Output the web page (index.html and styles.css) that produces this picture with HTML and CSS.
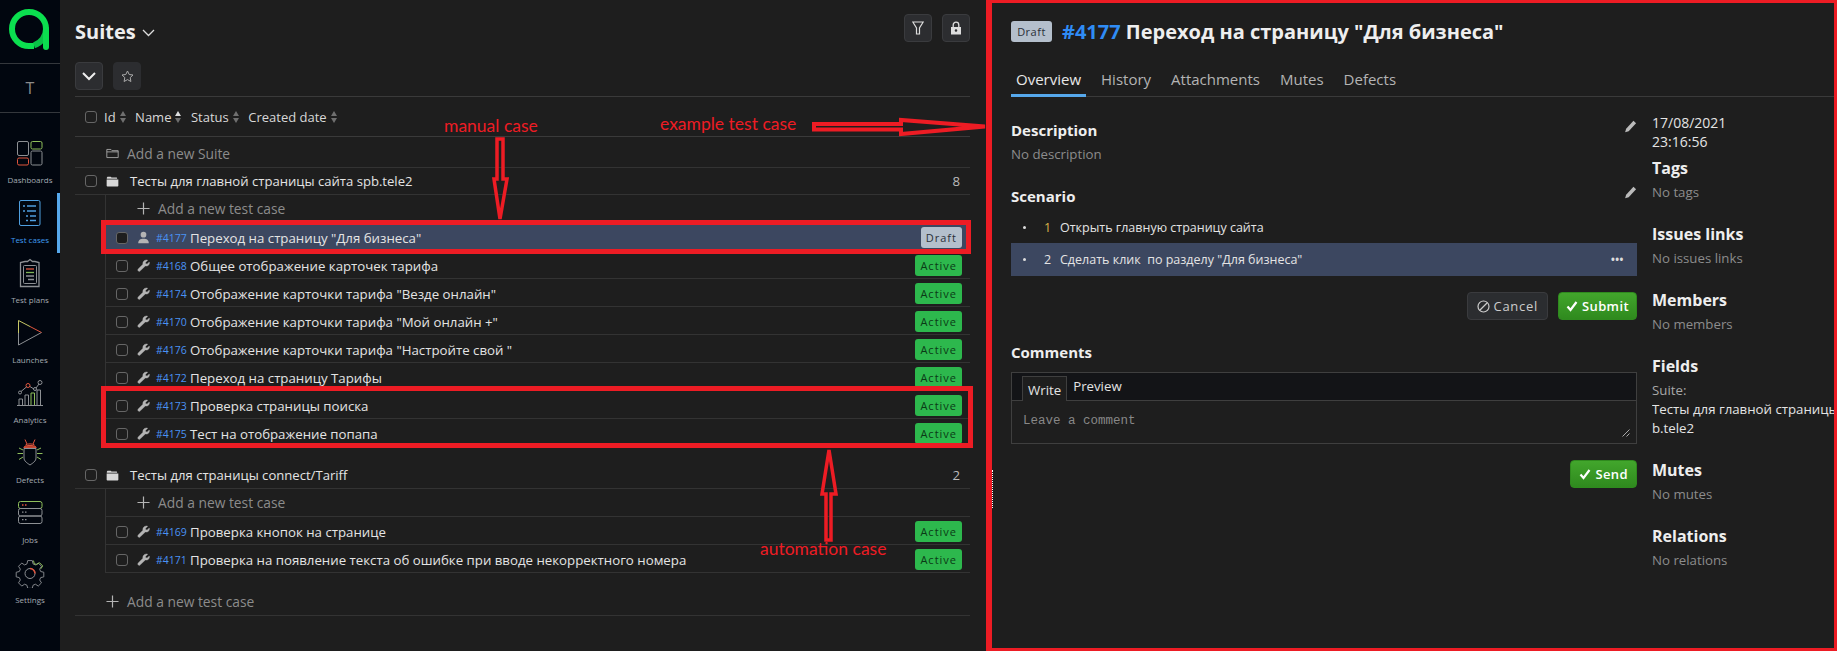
FILE: index.html
```html
<!DOCTYPE html>
<html lang="ru">
<head>
  <meta charset="UTF-8">
  <title>Test cases</title>
  <link rel="stylesheet" href="styles.css">
</head>
<body>
  <svg class="sprite" width="0" height="0">
    <symbol id="wrench" viewBox="0 0 16 16"><path fill="currentColor" stroke="currentColor" stroke-width=".5" d="M1.4 12.4 7.3 6.6C6.7 4 8.6 1.3 11.4 1.2c.7 0 1.2.1 1.7.4L10.4 4.2l.4 1.7 1.7.4 2.6-2.7c.9 2.8-1.600 5.800-4.900 5L4 14.600a1.500 1.500 0 0 1-2.600-2.200z"/></symbol>
    <symbol id="user" viewBox="0 0 16 16"><circle fill="currentColor" cx="8" cy="4.500" r="3.500"/><path fill="currentColor" d="M1.500 15c0-4 2.500-5.500 6.500-5.500s6.500 1.500 6.500 5.500z"/></symbol>
    <symbol id="folder-open" viewBox="0 0 16 16"><path fill="currentColor" d="M1 3.500 1.800 2h4l1 1.200h6.500l.5 1.300H1zM.8 5.500h14.400v7.700c0 .6-.5 1-1 1H1.800c-.5 0-1-.4-1-1z"/></symbol>
    <symbol id="folder" viewBox="0 0 16 16"><path fill="none" stroke="currentColor" d="M1 3h5l1.500 1.500H15V13H1z"/><path fill="none" stroke="currentColor" d="M1 6h14"/></symbol>
    <symbol id="plus" viewBox="0 0 14 14"><path fill="none" stroke="currentColor" stroke-width="1.300" d="M7 .5v13M.5 7h13"/></symbol>
    <symbol id="pencil" viewBox="0 0 14 14"><path fill="currentColor" d="M10.200 .8 13 3.400 5 12 1.200 13.300 2.300 9.300zM1 14"/></symbol>
    <symbol id="check" viewBox="0 0 12 12"><path fill="none" stroke="currentColor" stroke-width="2.200" d="M1.500 6.500 4.500 10 10.500 2"/></symbol>
  </svg>

  <div class="app">
    <nav class="sidebar">
      <div class="logo">
        <svg width="42" height="42" viewBox="0 0 42 42">
          <path d="M37 21a17 17 0 1 0-17 17h5" fill="none" stroke="#0be04f" stroke-width="6"/>
          <path d="M37 21a17 17 0 0 1-12 16.300" fill="none" stroke="#0ac247" stroke-width="6"/>
          <path d="M37 21v18" fill="none" stroke="#0be04f" stroke-width="6" stroke-linecap="round"/>
        </svg>
      </div>
      <div class="project">T</div>
      <a class="nav-item">
        <svg width="30" height="30" viewBox="0 0 30 30" fill="none">
          <rect x="2.500" y="3.500" width="11" height="14" rx="1.500" stroke="#8d9094"/>
          <rect x="16" y="3.500" width="11" height="7.500" rx="1.500" stroke="#8fbf5b"/>
          <rect x="2.500" y="20" width="11" height="7" rx="1.500" stroke="#e0553d"/>
          <rect x="16" y="13" width="11" height="14" rx="1.500" stroke="#8d9094"/>
        </svg>
        <span>Dashboards</span>
      </a>
      <a class="nav-item active">
        <svg width="30" height="30" viewBox="0 0 30 30" fill="none" stroke="#4f9fe0">
          <rect x="4.500" y="2.500" width="20.500" height="25" rx="1.500"/>
          <path stroke-width="1.500" d="M8 8h2M12 8h9M8 13h2M12 13h9M11 18h2M15 18h6M11 22.500h2M15 22.500h6"/>
        </svg>
        <span>Test cases</span>
      </a>
      <a class="nav-item">
        <svg width="30" height="30" viewBox="0 0 30 30" fill="none" stroke="#8d9094">
          <path stroke-width="1.300" d="M10 3.500h2.500l2.500-2 2.500 2H20l4 1v24H5.500v-24z"/>
          <rect x="8.500" y="7.500" width="13" height="18" rx="1"/>
          <path stroke="#e0553d" stroke-width="1.300" d="M11 11h8"/>
          <path stroke="#7fb356" stroke-width="1.300" d="M11 14.500h8"/>
          <path stroke-width="1.300" d="M11 18h8M13 21.500h6"/>
        </svg>
        <span>Test plans</span>
      </a>
      <a class="nav-item">
        <svg width="30" height="30" viewBox="0 0 30 30" fill="none">
          <path stroke="#c7c765" d="M3.500 2.500V15"/>
          <path stroke="#8d9094" d="M3.500 15v12l23-12.500"/>
          <path stroke="#e0553d" d="M15 8.500l11.500 6"/>
          <path stroke="#c7c765" d="M3.500 2.500 15 8.500"/>
        </svg>
        <span>Launches</span>
      </a>
      <a class="nav-item">
        <svg width="30" height="30" viewBox="0 0 30 30" fill="none" stroke="#8d9094">
          <path d="M2 27.500h26"/>
          <path d="M4 27v-6h3.500v6M10 27v-10h3.500v10M22 27V12h3.500v15"/>
          <path stroke="#8fbf5b" d="M16 27V15h3.500v12"/>
          <path d="M6 13.500l6-5M14 8l5 3M21 10l3-4"/>
          <circle cx="5" cy="14.500" r="1.500"/>
          <circle cx="13" cy="7.500" r="2" stroke="#e0553d"/>
          <circle cx="20" cy="11" r="1.500"/>
          <circle cx="25" cy="4.500" r="2"/>
        </svg>
        <span>Analytics</span>
      </a>
      <a class="nav-item">
        <svg width="30" height="30" viewBox="0 0 30 30" fill="none" stroke="#8d9094">
          <path stroke="#e0553d" d="M10 1.500l2 4.500M20 1.500l-2 4.500M10.500 7c2-1.500 7-1.500 9 0"/>
          <path fill="#b4402c" stroke="#e0553d" d="M9 9c1-2 11-2 12 0v1H9z"/>
          <path d="M9 10.500h12v9.500c0 3-3 5-6 7-3-2-6-4-6-7z"/>
          <path stroke="#8fbf5b" d="M8 12l-4-2M8 15.500H2.500M8 19l-4 2.500M22 12l4-2M22 15.500h5.500M22 19l4 2.500"/>
        </svg>
        <span>Defects</span>
      </a>
      <a class="nav-item">
        <svg width="30" height="30" viewBox="0 0 30 30" fill="none" stroke="#8d9094">
          <rect x="3.500" y="3.500" width="23.500" height="7" rx="2" stroke="#8fbf5b"/>
          <rect x="3.500" y="10.500" width="23.500" height="7.500" rx="2"/>
          <rect x="3.500" y="18" width="23.500" height="7.500" rx="2"/>
          <path stroke="#e0553d" stroke-width="1.300" d="M7 7h1.500M10 7h1.500"/>
          <path stroke-width="1.300" d="M7 14.200h1.500M10 14.200h1.500M7 21.700h1.500M10 21.700h1.500"/>
        </svg>
        <span>Jobs</span>
      </a>
      <a class="nav-item">
        <svg width="30" height="30" viewBox="0 0 30 30" fill="none" stroke="#8d9094">
          <path d="M12.500 1.500h5l.8 3.600 2.600 1.100 3.100-2 3.500 3.500-2 3.100 1.100 2.600 3.400.8v5l-3.400.8-1.100 2.600 2 3.100-3.500 3.500-3.100-2-2.600 1.100-.8 3.400h-5l-.8-3.400-2.600-1.100-3.100 2-3.500-3.500 2-3.100-1.100-2.600-3.400-.8v-5l3.400-.8 1.100-2.600-2-3.100 3.500-3.500 3.100 2 2.600-1.100z" transform="translate(1.200 1.200) scale(.92)"/>
          <path stroke="#8fbf5b" d="M18.500 2.600l.7 3 2.400 1 2.900-1.900 3.200 3.200-1.900 2.900"/>
          <circle cx="15" cy="15.500" r="5"/>
          <path stroke="#e0553d" stroke-width="1.500" d="M15 10.500a5 5 0 0 1 5 5"/>
        </svg>
        <span>Settings</span>
      </a>
    </nav>

    <main class="suites">
      <header class="suites-head">
        <h1>Suites</h1>
        <svg class="title-chevron" width="13" height="8" viewBox="0 0 13 8"><path d="M1 1l5.500 5.500L12 1" fill="none" stroke="#ddd" stroke-width="1.300"/></svg>
        <div class="head-actions">
          <button class="icon-btn">
            <svg width="12" height="14" viewBox="0 0 12 14"><path d="M.8 1h10.400L7.500 7v6h-3V7z" fill="none" stroke="#ddd" stroke-width="1.200"/></svg>
          </button>
          <button class="icon-btn">
            <svg width="12" height="14" viewBox="0 0 12 14"><path d="M3.200 6V4a2.800 2.800 0 0 1 5.600 0v2" fill="none" stroke="#ddd" stroke-width="1.300"/><path fill-rule="evenodd" d="M1 6h10v7.500H1zM6 8.200a1.300 1.300 0 1 0 0 2.600 1.300 1.300 0 0 0 0-2.600z" fill="#ddd"/></svg>
          </button>
        </div>
      </header>
      <div class="toolbar">
        <button class="icon-btn">
          <svg width="14" height="9" viewBox="0 0 14 9"><path d="M1 1l6 6 6-6" fill="none" stroke="#eee" stroke-width="2"/></svg>
        </button>
        <button class="icon-btn plain">
          <svg width="13" height="13" viewBox="0 0 13 13"><path d="M6.500 1l1.700 3.500 3.800.5-2.800 2.600.7 3.900-3.400-1.900-3.400 1.900.7-3.900L1 5l3.800-.5z" fill="none" stroke="#aaa"/></svg>
        </button>
      </div>
      <div class="sort-row">
        <span class="checkbox"></span>
        <span class="sort">Id<i class="carets"></i></span>
        <span class="sort">Name<i class="carets up"></i></span>
        <span class="sort">Status<i class="carets"></i></span>
        <span class="sort">Created date<i class="carets"></i></span>
      </div>
      <div class="add-row add-suite">
        <svg class="row-icon"><use href="#folder"/></svg>
        <span>Add a new Suite</span>
      </div>

      <div class="suite-row">
        <span class="checkbox"></span>
        <svg class="row-icon light"><use href="#folder-open"/></svg>
        <span class="suite-name">Тесты для главной страницы сайта spb.tele2</span>
        <span class="count">8</span>
      </div>
      <div class="cases">
        <div class="add-case">
          <svg class="row-icon"><use href="#plus"/></svg>
          <span>Add a new test case</span>
        </div>
        <div class="case selected">
          <span class="checkbox"></span>
          <svg class="row-icon"><use href="#user"/></svg>
          <a class="case-id">#4177</a>
          <span class="case-name">Переход на страницу "Для бизнеса"</span>
          <span class="badge draft">Draft</span>
        </div>
        <div class="case">
          <span class="checkbox"></span>
          <svg class="row-icon"><use href="#wrench"/></svg>
          <a class="case-id">#4168</a>
          <span class="case-name">Общее отображение карточек тарифа</span>
          <span class="badge">Active</span>
        </div>
        <div class="case">
          <span class="checkbox"></span>
          <svg class="row-icon"><use href="#wrench"/></svg>
          <a class="case-id">#4174</a>
          <span class="case-name">Отображение карточки тарифа "Везде онлайн"</span>
          <span class="badge">Active</span>
        </div>
        <div class="case">
          <span class="checkbox"></span>
          <svg class="row-icon"><use href="#wrench"/></svg>
          <a class="case-id">#4170</a>
          <span class="case-name">Отображение карточки тарифа "Мой онлайн +"</span>
          <span class="badge">Active</span>
        </div>
        <div class="case">
          <span class="checkbox"></span>
          <svg class="row-icon"><use href="#wrench"/></svg>
          <a class="case-id">#4176</a>
          <span class="case-name">Отображение карточки тарифа "Настройте свой "</span>
          <span class="badge">Active</span>
        </div>
        <div class="case">
          <span class="checkbox"></span>
          <svg class="row-icon"><use href="#wrench"/></svg>
          <a class="case-id">#4172</a>
          <span class="case-name">Переход на страницу Тарифы</span>
          <span class="badge">Active</span>
        </div>
        <div class="case">
          <span class="checkbox"></span>
          <svg class="row-icon"><use href="#wrench"/></svg>
          <a class="case-id">#4173</a>
          <span class="case-name">Проверка страницы поиска</span>
          <span class="badge">Active</span>
        </div>
        <div class="case">
          <span class="checkbox"></span>
          <svg class="row-icon"><use href="#wrench"/></svg>
          <a class="case-id">#4175</a>
          <span class="case-name">Тест на отображение попапа</span>
          <span class="badge">Active</span>
        </div>
      </div>

      <div class="suite-row second">
        <span class="checkbox"></span>
        <svg class="row-icon light"><use href="#folder-open"/></svg>
        <span class="suite-name">Тесты для страницы connect/Tariff</span>
        <span class="count">2</span>
      </div>
      <div class="cases">
        <div class="add-case">
          <svg class="row-icon"><use href="#plus"/></svg>
          <span>Add a new test case</span>
        </div>
        <div class="case">
          <span class="checkbox"></span>
          <svg class="row-icon"><use href="#wrench"/></svg>
          <a class="case-id">#4169</a>
          <span class="case-name">Проверка кнопок на странице</span>
          <span class="badge">Active</span>
        </div>
        <div class="case">
          <span class="checkbox"></span>
          <svg class="row-icon"><use href="#wrench"/></svg>
          <a class="case-id">#4171</a>
          <span class="case-name">Проверка на появление текста об ошибке при вводе некорректного номера</span>
          <span class="badge">Active</span>
        </div>
      </div>
      <div class="add-row add-bottom">
        <svg class="row-icon"><use href="#plus"/></svg>
        <span>Add a new test case</span>
      </div>
    </main>

    <section class="detail">
      <i class="resizer"></i>
      <div class="detail-title">
        <span class="badge draft big">Draft</span>
        <h2><a>#4177</a> Переход на страницу "Для бизнеса"</h2>
      </div>
      <div class="tabs">
        <a class="tab current">Overview</a>
        <a class="tab">History</a>
        <a class="tab">Attachments</a>
        <a class="tab">Mutes</a>
        <a class="tab">Defects</a>
      </div>
      <div class="detail-body">
        <div class="detail-main">
          <div class="section-head">
            <h3>Description</h3>
            <svg class="pencil"><use href="#pencil"/></svg>
          </div>
          <p class="muted">No description</p>
          <div class="section-head scenario">
            <h3>Scenario</h3>
            <svg class="pencil"><use href="#pencil"/></svg>
          </div>
          <div class="steps">
            <div class="step">
              <span class="step-dot"></span>
              <span class="step-num first">1</span>
              <span>Открыть главную страницу сайта</span>
            </div>
            <div class="step current">
              <span class="step-dot"></span>
              <span class="step-num">2</span>
              <span>Сделать клик&nbsp; по разделу "Для бизнеса"</span>
              <span class="step-more">•••</span>
            </div>
          </div>
          <div class="actions">
            <button class="btn cancel">
              <svg width="13" height="13" viewBox="0 0 13 13"><circle cx="6.500" cy="6.500" r="5.500" fill="none" stroke="#ccc" stroke-width="1.200"/><path d="M3 10l7-7" stroke="#ccc" stroke-width="1.200"/></svg>
              Cancel
            </button>
            <button class="btn green">
              <svg width="12" height="12"><use href="#check"/></svg>
              Submit
            </button>
          </div>
          <h3 class="comments">Comments</h3>
          <div class="comment-box">
            <div class="comment-tabs">
              <span class="comment-tab current">Write</span>
              <span class="comment-tab">Preview</span>
            </div>
            <div class="comment-input">
              <span>Leave a comment</span>
              <svg class="grip" width="8" height="8" viewBox="0 0 8 8"><path d="M7.500 .5l-7 7M7.500 4.500l-3 3" stroke="#aaa" stroke-width="1"/></svg>
            </div>
          </div>
          <div class="actions send">
            <button class="btn green">
              <svg width="12" height="12"><use href="#check"/></svg>
              Send
            </button>
          </div>
        </div>
        <aside class="detail-side">
          <div class="date">17/08/2021<br>23:16:56</div>
          <h3 class="first-side">Tags</h3>
          <p class="muted">No tags</p>
          <h3>Issues links</h3>
          <p class="muted">No issues links</p>
          <h3>Members</h3>
          <p class="muted">No members</p>
          <h3>Fields</h3>
          <p class="muted field-label">Suite:</p>
          <p class="field-value">Тесты для главной страницы сайта sp<br>b.tele2</p>
          <h3>Mutes</h3>
          <p class="muted">No mutes</p>
          <h3>Relations</h3>
          <p class="muted">No relations</p>
        </aside>
      </div>
    </section>
  </div>

  <!-- red annotations drawn over the screenshot -->
  <div class="frame frame-detail"></div>
  <div class="frame frame-manual"></div>
  <div class="frame frame-auto"></div>
  <span class="note note-manual">manual case</span>
  <span class="note note-example">example test case</span>
  <span class="note note-auto">automation case</span>
  <svg class="arrows" width="1837" height="651" fill="none" stroke="#ed1c24">
    <path stroke-width="4" d="M814 124H901V120L985 126.500 901 134V129.500H814Z"/>
    <path stroke-width="3.500" d="M497 139H503V179H507L500 219 494 179H497Z"/>
    <path stroke-width="3.500" d="M826 540H831V494H836L829 450 822 494H826Z"/>
  </svg>
</body>
</html>
```

FILE: styles.css
```css
* {
  box-sizing: border-box;
}
html, body {
  margin: 0;
  height: 651px;
  overflow: hidden;
}
body {
  background: #1e1e1e;
  color: #e4e4e4;
  font-family: "Open Sans", "Noto Sans", sans-serif;
  font-size: 13.25px;
  position: relative;
}
h1, h2, h3, p {
  margin: 0;
}
button {
  font-family: inherit;
}
.sprite {
  position: absolute;
}
.app {
  display: flex;
  height: 651px;
}

/* sidebar */
.sidebar {
  width: 60px;
  flex: none;
  background: #01060f;
  display: flex;
  flex-direction: column;
}
.logo {
  height: 64px;
  border-bottom: 1px solid #34373c;
  padding: 8px 0 0 9px;
}
.project {
  height: 49px;
  border-bottom: 1px solid #34373c;
  margin-bottom: 20px;
  display: flex;
  align-items: center;
  justify-content: center;
  font-size: 16px;
  color: #8a8a8a;
}
.nav-item {
  height: 60px;
  padding-top: 5px;
  display: flex;
  flex-direction: column;
  align-items: center;
  gap: 5px;
  font-size: 8px;
  line-height: 14px;
  color: #a4aab2;
}
.nav-item.active {
  color: #3f9cf0;
  border-right: 3px solid #56a8ec;
  padding-left: 3px;
}

/* suites list */
.suites {
  width: 927px;
  flex: none;
  padding: 0 17px 0 15px;
}
.suites-head {
  height: 62px;
  padding-top: 14px;
  display: flex;
  align-items: flex-start;
}
.suites-head h1 {
  font-size: 20px;
  line-height: 36px;
  color: #eee;
}
.title-chevron {
  margin: 15px 0 0 6px;
}
.head-actions {
  margin-left: auto;
  display: flex;
  gap: 10px;
}
.icon-btn {
  width: 28px;
  height: 28px;
  padding: 0;
  display: flex;
  align-items: center;
  justify-content: center;
  background: #2c2d30;
  border: 1px solid #3a3b3e;
  border-radius: 4px;
}
.icon-btn.plain {
  border-color: #2c2d30;
}
.toolbar {
  height: 35px;
  display: flex;
  gap: 10px;
  border-bottom: 1px solid #3a3a3a;
}
.checkbox {
  width: 12px;
  height: 12px;
  flex: none;
  border: 1px solid #666;
  border-radius: 3px;
}
.sort-row {
  height: 40px;
  padding-left: 10px;
  display: flex;
  align-items: center;
  gap: 9.5px;
  border-bottom: 1px solid #3a3a3a;
  color: #d8d8d8;
  font-size: 13px;
}
.sort-row .checkbox {
  margin-right: -2.5px;
}
.sort {
  display: flex;
  align-items: center;
  gap: 4px;
}
.carets {
  width: 6px;
  height: 12px;
  display: flex;
  flex-direction: column;
  justify-content: space-between;
}
.carets::before {
  content: "";
  border: 3px solid transparent;
  border-top: 0;
  border-bottom: 5px solid #6f6f6f;
}
.carets::after {
  content: "";
  border: 3px solid transparent;
  border-bottom: 0;
  border-top: 5px solid #6f6f6f;
}
.carets.up::before {
  border-bottom-color: #ddd;
}
.row-icon {
  width: 13px;
  height: 13px;
  flex: none;
  color: #b4b4b4;
}
.row-icon.light {
  color: #d8d8d8;
}
.add-row {
  display: flex;
  align-items: center;
  gap: 8px;
  padding-left: 31px;
  color: #8c8c8c;
  font-size: 13.8px;
  border-bottom: 1px solid #333;
}
.add-suite {
  height: 31px;
  padding-top: 2px;
}
.add-bottom {
  height: 29px;
  margin-top: 14px;
}
.suite-row {
  height: 27px;
  padding: 0 10px;
  display: flex;
  align-items: center;
  border-bottom: 1px solid #333;
}
.suite-row .row-icon {
  margin: 0 11px 0 9px;
}
.suite-row.second {
  margin-top: 15px;
}
.suite-name {
  font-size: 13.1px;
}
.count {
  margin-left: auto;
  color: #bbb;
}
.cases {
  margin-left: 30px;
  border-left: 1px solid #333;
}
.add-case {
  height: 28px;
  padding-left: 31px;
  display: flex;
  align-items: center;
  gap: 8px;
  color: #8c8c8c;
  font-size: 13.8px;
  border-bottom: 1px solid #333;
}
.case {
  height: 28px;
  padding: 2px 8px 0 10px;
  display: flex;
  align-items: center;
  border-bottom: 1px solid #333;
}
.case .row-icon {
  margin-left: 9px;
}
.case-id {
  width: 34px;
  margin-left: 6px;
  color: #4a93f5;
  font-size: 10.5px;
}
.case.selected {
  background: #3c4760;
}
.case.selected .checkbox {
  background: #1e1e1e;
}
.badge {
  margin-left: auto;
  height: 21px;
  padding: 0 5px;
  display: flex;
  align-items: center;
  background: #2db84d;
  color: #0b3a16;
  border-radius: 3px;
  font-size: 11px;
  letter-spacing: 1px;
}
.badge.draft {
  background: #b4bfcc;
  color: #2a2f38;
}

/* detail panel */
.detail {
  flex: 1;
  min-width: 0;
  padding: 21px 3px 0 24px;
  position: relative;
}
.resizer {
  position: absolute;
  left: 5px;
  top: 470px;
  height: 38px;
  border-left: 1px dotted #fff;
}
.detail-title {
  height: 21px;
  display: flex;
  align-items: center;
  gap: 10px;
}
.detail-title h2 {
  font-size: 20px;
  color: #eee;
  white-space: nowrap;
}
.detail-title a {
  color: #2f8cf5;
}
.badge.big {
  margin: 0;
  width: 41px;
  padding: 0;
  justify-content: center;
  letter-spacing: .5px;
}
.tabs {
  margin-top: 14px;
  height: 41px;
  padding-top: 13px;
  display: flex;
  gap: 10px;
  border-bottom: 1px solid #3a3a3a;
  font-size: 15px;
  color: #b4b4b4;
}
.tab {
  padding: 0 5px;
  line-height: 20px;
  height: 28px;
}
.tab.current {
  color: #e8e8e8;
  border-bottom: 3px solid #56a8ec;
}
.detail-body {
  display: flex;
  gap: 15px;
}
.detail-main {
  width: 626px;
  flex: none;
  padding-top: 23px;
}
.section-head {
  display: flex;
  justify-content: space-between;
}
.section-head.scenario {
  margin-top: 22px;
}
h3 {
  font-size: 15px;
  line-height: 20px;
  color: #eee;
}
.pencil {
  width: 13px;
  height: 13px;
  color: #bbb;
}
.muted {
  margin-top: 4px;
  line-height: 20px;
  color: #8c8c8c;
}
.steps {
  margin-top: 6px;
}
.step {
  height: 31px;
  padding: 0 12px;
  display: flex;
  align-items: center;
  font-size: 12.5px;
}
.step.current {
  height: 33px;
  background: #3c4760;
}
.step-dot {
  width: 3px;
  height: 3px;
  background: #ddd;
  border-radius: 50%;
  margin-right: 18px;
}
.step-num {
  width: 16px;
}
.step-num.first {
  color: #d9b44a;
}
.step-more {
  margin-left: auto;
  font-size: 14px;
  letter-spacing: -1px;
  color: #ddd;
  padding-right: 2px;
}
.actions {
  margin-top: 16px;
  display: flex;
  justify-content: flex-end;
  gap: 10px;
}
.btn {
  height: 28px;
  padding: 0 7px;
  display: flex;
  align-items: center;
  gap: 4px;
  background: #2b2d30;
  border: 1px solid #3a3b3e;
  border-radius: 4px;
  color: #ccc;
  font-size: 13px;
  letter-spacing: .4px;
}
.btn.cancel {
  padding: 0 9px;
  letter-spacing: .7px;
}
.btn.green {
  background: linear-gradient(#42a62c, #2f8a1e);
  border-color: #2f8a1e;
  color: #fff;
  font-weight: 600;
}
.send .btn {
  padding: 0 8px;
}
.comments {
  margin-top: 22px;
}
.comment-box {
  margin-top: 10px;
  height: 72px;
  border: 1px solid #3f3f3f;
}
.comment-tabs {
  height: 28px;
  padding: 3px 0 0 10px;
  display: flex;
  align-items: flex-start;
  gap: 6px;
  background: #131417;
  border-bottom: 1px solid #3f3f3f;
}
.comment-tab {
  line-height: 20px;
}
.comment-tab.current {
  height: 25px;
  padding: 3px 5px 0;
  background: #1e1e1e;
  border: 1px solid #3f3f3f;
  border-bottom: 0;
}
.comment-input {
  position: relative;
  height: 42px;
  padding: 12px 11px;
  font-family: "Liberation Mono", monospace;
  font-size: 12.5px;
  line-height: 16px;
  color: #888;
}
.grip {
  position: absolute;
  right: 6px;
  bottom: 6px;
}
.detail-side {
  padding-top: 16px;
  min-width: 0;
  flex: 1;
  overflow: hidden;
}
.detail-side h3 {
  margin-top: 22px;
  font-size: 16px;
}
.detail-side h3.first-side {
  margin-top: 7px;
}
.date {
  line-height: 19px;
  font-size: 14px;
}
.field-label {
  color: #a8a8a8;
}
.field-value {
  white-space: nowrap;
  line-height: 19px;
}

/* annotations */
.frame {
  position: absolute;
  border: 5px solid #ed1c24;
}
.frame-detail {
  left: 986px;
  top: 0;
  width: 851px;
  height: 651px;
  border-width: 3px 3px 3px 6px;
}
.frame-manual {
  left: 101px;
  top: 220px;
  width: 870px;
  height: 34px;
}
.frame-auto {
  left: 101px;
  top: 386px;
  width: 872px;
  height: 62px;
}
.note {
  position: absolute;
  font-family: Lato, sans-serif;
  font-size: 17.5px;
  line-height: 20px;
  color: #ed1c24;
}
.note-manual {
  left: 444px;
  top: 116px;
}
.note-example {
  left: 660px;
  top: 114px;
}
.note-auto {
  left: 760px;
  top: 539px;
}
.arrows {
  position: absolute;
  left: 0;
  top: 0;
}
```
